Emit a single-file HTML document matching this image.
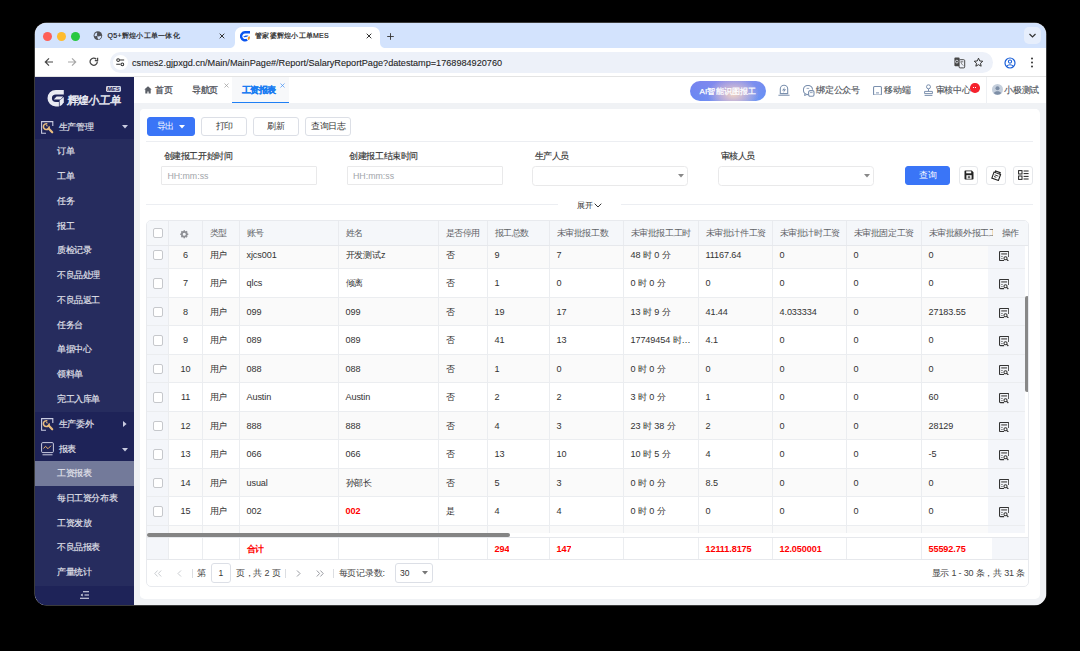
<!DOCTYPE html>
<html><head><meta charset="utf-8">
<style>
*{margin:0;padding:0;box-sizing:border-box}
html,body{width:1080px;height:651px;overflow:hidden;background:#000;font-family:"Liberation Sans",sans-serif}
.a{position:absolute}
#win{position:absolute;left:35px;top:23px;width:1011px;height:582px;border-radius:11.5px;overflow:hidden;background:#fff;box-shadow:0 0 0 0.5px #777}
#strip{position:absolute;left:0;top:0;width:1011px;height:25px;background:#d3e3fd}
.dot{position:absolute;top:9px;width:9px;height:9px;border-radius:50%}
#toolbar{position:absolute;left:0;top:25px;width:1011px;height:29px;background:#fff;border-bottom:1px solid #e4e4e4}
#omni{position:absolute;left:75px;top:4px;width:883px;height:21px;border-radius:11px;background:#edf1f9}
#page{position:absolute;left:0;top:54px;width:1011px;height:528px;background:#f0f2f5}
#side{position:absolute;left:0;top:0;width:99px;height:528px;background:#262c5e;color:#e8e9f0}
#hdr{position:absolute;left:99px;top:0;width:912px;height:26px;background:#fff}
.tt{font-size:7px;letter-spacing:0.25px;line-height:11px;white-space:nowrap;-webkit-text-stroke:.2px #1f1f1f}
.mi{left:0;width:99px;height:24.75px;background:#1e2358}
.mt{top:6.2px;font-size:9px;line-height:12px;color:#e2e3ec;white-space:nowrap;letter-spacing:-.2px;-webkit-text-stroke:.15px #e2e3ec}
.st{left:22px;height:24.75px;padding-top:6.1px;font-size:9px;line-height:12px;color:#e2e3ec;white-space:nowrap;letter-spacing:-.4px;-webkit-text-stroke:.15px #e2e3ec}
#card{position:absolute;left:105px;top:32px;width:899px;height:489px;background:#fff;border-radius:4px}

.ht{font-size:9px;line-height:12px;white-space:nowrap;letter-spacing:-.4px;-webkit-text-stroke:.25px currentColor}
.ht2{font-size:9px;line-height:12px;white-space:nowrap;color:#50545b;letter-spacing:-.3px;-webkit-text-stroke:.15px #50545b}
.btn{top:116.5px;height:19px;letter-spacing:-.4px;border:1px solid #dcdfe6;border-radius:3px;background:#fff;font-size:9px;line-height:12px;padding-top:2.8px;text-align:center;color:#333;white-space:nowrap}
.lb{top:150px;font-size:9px;line-height:12px;color:#333;white-space:nowrap;letter-spacing:-.45px;-webkit-text-stroke:.15px #333}
.inp{top:166.4px;width:155.5px;height:18.2px;border:1px solid #e9e9ea;border-radius:1px}
.ph{top:170.8px;font-size:8.8px;line-height:11px;color:#a2a5aa;white-space:nowrap}
.th{height:14px;padding:0 0 0 6.8px;font-size:9px;line-height:12px;color:#606266;white-space:nowrap;overflow:hidden;letter-spacing:-.45px}
.td{height:14px;padding:0 0 0 6.5px;font-size:9.1px;letter-spacing:-.1px;line-height:12px;color:#333;white-space:nowrap;overflow:hidden}
.cb{width:10.6px;height:10.6px;border:1px solid #c6c8cc;border-radius:2px;background:#fff}
.pg{font-size:9px;line-height:12px;color:#444;white-space:nowrap;letter-spacing:-.2px}
</style></head><body>
<div id="win">
  <div id="strip">
    <div class="dot" style="left:7.5px;background:#fe5f57"></div>
    <div class="dot" style="left:21.9px;background:#febc2e"></div>
    <div class="dot" style="left:36px;background:#28c840"></div>
    <svg class="a" style="left:58px;top:8px" width="10" height="10" viewBox="0 0 10 10"><circle cx="4.9" cy="4.6" r="4.3" fill="#4f5157"/><path d="M1.7 3.4C2.3 2.3 3.3 1.7 4.3 1.9 3.8 2.8 3.6 3.5 4.4 4.2 3.7 5 2.6 5.3 1.5 5.1z" fill="#d3e3fd"/><path d="M3.9 5.4C5.1 5.9 6.7 5.2 8.2 4.7 8.5 6.2 7.4 8 5.2 8.4 4.6 7.6 4.8 6.5 3.9 5.4z" fill="#d3e3fd"/></svg>
    <div class="a tt" style="left:72.6px;top:7px;color:#1f1f1f">Q5+辉煌小工单一体化</div>
    <svg class="a" style="left:183px;top:9px" width="8" height="8" viewBox="0 0 8 8"><path d="M1.7 1.7l4.6 4.6M6.3 1.7l-4.6 4.6" stroke="#333" stroke-width="1"/></svg>
    <svg class="a" style="left:194px;top:4px" width="157" height="21" viewBox="0 0 157 21"><path d="M0 21c4 0 6-2 6-6V7c0-4 3-7 7-7h131c4 0 7 3 7 7v8c0 4 2 6 6 6z" fill="#fff"/></svg>
    <svg class="a" style="left:205px;top:8px" width="11" height="11" viewBox="0 0 11 11"><path d="M10 1.3H5A4 4 0 1 0 7.2 8.7" stroke="#0b55ef" stroke-width="2.4" fill="none"/><path d="M3 6.1C4.1 4.6 6.1 4.2 8.5 4.6 7.5 5.8 5.7 6.5 3 6.1z" fill="#0b55ef"/><ellipse cx="8.9" cy="7.1" rx="1.05" ry="1.9" transform="rotate(15 8.9 7.1)" fill="#f7931e"/></svg>
    <div class="a tt" style="left:220px;top:7px;color:#1f1f1f">管家婆辉煌小工单MES</div>
    <svg class="a" style="left:330px;top:9px" width="8" height="8" viewBox="0 0 8 8"><path d="M1.7 1.7l4.6 4.6M6.3 1.7l-4.6 4.6" stroke="#333" stroke-width="1"/></svg>
    <svg class="a" style="left:351px;top:8.5px" width="9" height="9" viewBox="0 0 9 9"><path d="M4.5 1.2v6.6M1.2 4.5h6.6" stroke="#333" stroke-width=".9"/></svg>
    <div class="a" style="left:989px;top:4px;width:17px;height:17px;border-radius:5px;background:#e6eefc"></div>
    <svg class="a" style="left:993px;top:9px" width="9" height="7" viewBox="0 0 9 7"><path d="M1.5 2l3 3 3-3" stroke="#333" stroke-width="1.2" fill="none"/></svg>
  </div>
  <div id="toolbar">
    <svg class="a" style="left:9px;top:9.4px" width="10" height="10" viewBox="0 0 10 10"><path d="M9 5H1.5M5 1.3L1.3 5 5 8.7" stroke="#474747" stroke-width="1.2" fill="none"/></svg>
    <svg class="a" style="left:31.5px;top:9.4px" width="10" height="10" viewBox="0 0 10 10"><path d="M1 5h7.5M5 1.3L8.7 5 5 8.7" stroke="#a8a8a8" stroke-width="1.2" fill="none"/></svg>
    <svg class="a" style="left:53.5px;top:9.4px" width="10" height="10" viewBox="0 0 10 10"><path d="M8.3 4.6A3.6 3.6 0 1 1 7.3 2.2" stroke="#474747" stroke-width="1.25" fill="none"/><path d="M8.6 0.8v2.8H5.8" stroke="#474747" stroke-width="1.25" fill="none"/></svg>
    <div id="omni">
      <div class="a" style="left:2.6px;top:3px;width:15px;height:15px;border-radius:50%;background:#fff"></div>
      <svg class="a" style="left:6px;top:6.2px" width="8.5" height="8.5" viewBox="0 0 10 10"><circle cx="2.5" cy="2.4" r="1.6" stroke="#333" stroke-width="1.2" fill="none"/><path d="M4.6 2.4h5" stroke="#333" stroke-width="1.3"/><circle cx="7.5" cy="7.4" r="1.6" stroke="#333" stroke-width="1.2" fill="none"/><path d="M.3 7.4h5" stroke="#333" stroke-width="1.3"/></svg>
      <div class="a" style="left:22px;top:4.8px;font-size:9.15px;line-height:13px;color:#1f1f1f;white-space:nowrap;-webkit-text-stroke:.1px #1f1f1f">csmes2.gjpxgd.cn/Main/MainPage#/Report/SalaryReportPage?datestamp=1768984920760</div>
    </div>
        <svg class="a" style="left:918.5px;top:9px" width="12" height="12" viewBox="0 0 12 12"><rect x=".4" y=".4" width="5.2" height="8.8" rx="1" fill="#474747"/><circle cx="2.9" cy="4.6" r="1.4" stroke="#eef1f9" stroke-width=".8" fill="none"/><rect x="5.1" y="2.7" width="5.6" height="8.2" rx="1" fill="#eef1f9" stroke="#474747" stroke-width="1"/><path d="M6.4 4.8h3M7.9 4.2v.8M6.9 4.9c.4 1.6 1.3 3 2.6 3.7" stroke="#666" stroke-width=".75" fill="none"/></svg>
    <svg class="a" style="left:938px;top:8.5px" width="11" height="11" viewBox="0 0 11 11"><path d="M5.5 1.2l1.25 2.75 3 .3-2.25 2 .65 2.95-2.65-1.5-2.65 1.5.65-2.95-2.25-2 3-.3z" stroke="#333" stroke-width="1" fill="none" stroke-linejoin="round"/></svg>
    <svg class="a" style="left:968.5px;top:8.5px" width="12" height="12" viewBox="0 0 12 12"><circle cx="6" cy="6" r="5" stroke="#1a5fd8" stroke-width="1.2" fill="none"/><circle cx="6" cy="4.6" r="1.6" stroke="#1a5fd8" stroke-width="1.1" fill="none"/><path d="M2.8 9.2c1.6-1.9 4.8-1.9 6.4 0" stroke="#1a5fd8" stroke-width="1.1" fill="none"/></svg>
    <svg class="a" style="left:994.5px;top:9px" width="4" height="11" viewBox="0 0 4 11"><circle cx="2" cy="1.6" r="1" fill="#333"/><circle cx="2" cy="5.5" r="1" fill="#333"/><circle cx="2" cy="9.4" r="1" fill="#333"/></svg>
  </div>
  <div id="page">
    <div id="side">
<div class="a" style="left:0;top:0;width:99px;height:37.6px;background:#1e2358"></div>
<svg class="a" style="left:11.7px;top:11.5px" width="18" height="18" viewBox="0 0 18 18"><path d="M16.8 .9H8.8A8.3 8.3 0 0 0 8.8 17.5H11.9V13H8.9A4 3.7 0 0 1 8.9 5.6H16.8Z" fill="#e9eaf2"/><path d="M6.8 10.6L9.6 7.5H16.2L13.4 10.6Z" fill="#e9eaf2"/><path d="M12.6 17.2L12.6 11.4 16.8 7.9V13.2A8 8 0 0 1 12.6 17.2Z" fill="#e9eaf2"/></svg>
<div class="a" style="left:32.3px;top:16.8px;font-size:11px;line-height:12px;color:#e9eaf2;letter-spacing:-0.2px;transform:skewX(-7deg);-webkit-text-stroke:0.5px #e9eaf2;white-space:nowrap">辉煌小工单</div>
<svg class="a" style="left:71.4px;top:8.9px" width="15" height="6" viewBox="0 0 15 6"><rect x="0" y="0" width="15" height="6" rx="1.4" fill="#d3d6e6"/><text x="7.6" y="5.05" text-anchor="middle" font-family="Liberation Sans" font-weight="bold" font-style="italic" font-size="5.6" fill="#1e2358" letter-spacing=".15">MES</text></svg>
<div class="a mi" style="top:37.60px"><svg class="a" style="left:6px;top:6.4px" width="13" height="13" viewBox="0 0 13 13"><path d="M11.8 5V.6H.6v11.6H5" stroke="#c9cbe0" stroke-width="1.1" fill="none"/><path d="M6.3 2.9A2.9 2.9 0 1 0 8.2 5.3" stroke="#e9bd80" stroke-width="1.6" fill="none"/><path d="M5.2 4.6l1.4.5" stroke="#e9bd80" stroke-width="1.1"/><path d="M7.6 7.6l3.6 3.7" stroke="#e9bd80" stroke-width="2.2" stroke-linecap="round"/></svg><div class="a mt" style="left:23.5px">生产管理</div><svg class="a" style="left:86.5px;top:10.5px" width="6" height="4" viewBox="0 0 6 4"><path d="M0 0h6L3 3.6z" fill="#c9cbe0"/></svg></div>
<div class="a" style="left:0;top:62.35px;width:99px;height:272.25px;background:#262c5e"></div>
<div class="a st" style="top:62.35px">订单</div>
<div class="a st" style="top:87.10px">工单</div>
<div class="a st" style="top:111.85px">任务</div>
<div class="a st" style="top:136.60px">报工</div>
<div class="a st" style="top:161.35px">质检记录</div>
<div class="a st" style="top:186.10px">不良品处理</div>
<div class="a st" style="top:210.85px">不良品返工</div>
<div class="a st" style="top:235.60px">任务台</div>
<div class="a st" style="top:260.35px">单据中心</div>
<div class="a st" style="top:285.10px">领料单</div>
<div class="a st" style="top:309.85px">完工入库单</div>
<div class="a mi" style="top:334.60px"><svg class="a" style="left:6px;top:6.4px" width="13" height="13" viewBox="0 0 13 13"><path d="M11.8 5V.6H.6v11.6H5" stroke="#c9cbe0" stroke-width="1.1" fill="none"/><path d="M6.3 2.9A2.9 2.9 0 1 0 8.2 5.3" stroke="#e9bd80" stroke-width="1.6" fill="none"/><path d="M5.2 4.6l1.4.5" stroke="#e9bd80" stroke-width="1.1"/><path d="M7.6 7.6l3.6 3.7" stroke="#e9bd80" stroke-width="2.2" stroke-linecap="round"/></svg><div class="a mt" style="left:23.5px">生产委外</div><svg class="a" style="left:88.3px;top:9.5px" width="4" height="6" viewBox="0 0 4 6"><path d="M0 0v6l3.6-3z" fill="#c9cbe0"/></svg></div>
<div class="a mi" style="top:359.35px"><svg class="a" style="left:6px;top:6px" width="13" height="14" viewBox="0 0 13 14"><rect x=".6" y=".6" width="11.8" height="10" rx="1.2" stroke="#c9cbe0" stroke-width="1" fill="none"/><path d="M2.5 6.5l2-2.2 2.5 2.4 3-3" stroke="#e8b06a" stroke-width="1" fill="none"/><path d="M1.5 12.8h10" stroke="#c9cbe0" stroke-width="1"/></svg><div class="a mt" style="left:23.5px">报表</div><svg class="a" style="left:86.6px;top:11.2px" width="6" height="4" viewBox="0 0 6 4"><path d="M0 0h6L3 3.6z" fill="#c9cbe0"/></svg></div>
<div class="a" style="left:0;top:384.10px;width:99px;height:123.75px;background:#262c5e"></div>
<div class="a" style="left:0;top:383.80px;width:99px;height:25px;background:#737a9a"></div>
<div class="a st" style="top:384.10px">工资报表</div>
<div class="a st" style="top:408.85px">每日工资分布表</div>
<div class="a st" style="top:433.60px">工资发放</div>
<div class="a st" style="top:458.35px">不良品报表</div>
<div class="a st" style="top:483.10px">产量统计</div>
<div class="a" style="left:0;top:508.5px;width:99px;height:19.5px;background:#1e2358"></div>
<svg class="a" style="left:45px;top:513.5px" width="9" height="8" viewBox="0 0 9 8"><path d="M3 .7h6M4.5 4h4.5M0 7.3h9" stroke="#e9eaf2" stroke-width="1.1"/><path d="M2.6 2.4L.6 4l2 1.6z" fill="#e9eaf2"/></svg>
</div>
    <div id="hdr"></div>
    <div id="card"></div>
  </div>
  <div id="abs" style="position:absolute;left:-35px;top:-23px;width:1080px;height:651px">
<div class="a" style="left:134px;top:77px;width:912px;height:26px;background:#fff"></div>
<svg class="a" style="left:144px;top:86px" width="8" height="8" viewBox="0 0 8 8"><path d="M4 .3L.3 3.6h1v4h2.1V5.4h1.2v2.2h2.1v-4h1z" fill="#5a5e66"/></svg>
<div class="a ht" style="left:155px;top:84px;color:#4a4d55">首页</div>
<div class="a ht" style="left:192px;top:84px;color:#4a4d55">导航页</div>
<svg class="a" style="left:223.5px;top:83px" width="5" height="5" viewBox="0 0 5 5"><path d="M.5.5l4 4M4.5.5l-4 4" stroke="#999" stroke-width=".7"/></svg>
<div class="a" style="left:232.2px;top:77px;width:56.8px;height:26px;background:#f7f8fa"></div>
<div class="a" style="left:232.2px;top:101.5px;width:56.8px;height:1.8px;background:#1e7ff5"></div>
<div class="a ht" style="left:241.7px;top:84px;color:#1a7cf2;font-weight:bold">工资报表</div>
<svg class="a" style="left:279.5px;top:83px" width="5" height="5" viewBox="0 0 5 5"><path d="M.5.5l4 4M4.5.5l-4 4" stroke="#3d8ef5" stroke-width=".7"/></svg>
<div class="a" style="left:689.7px;top:81.2px;width:76px;height:19.7px;border-radius:10px;background:radial-gradient(ellipse 34% 85% at 57% 66%,rgba(240,212,196,1) 0%,rgba(220,192,208,.75) 40%,rgba(180,160,220,0) 100%),linear-gradient(180deg,rgba(130,130,235,.5),rgba(90,140,245,.3)),linear-gradient(90deg,#6a86f3 0%,#8b95ee 45%,#8aa0ef 65%,#6893f5 100%)"></div>
<div class="a" style="left:699.5px;top:86.2px;font-size:8px;line-height:11px;color:#fff;white-space:nowrap;letter-spacing:.15px;-webkit-text-stroke:.25px #fff">AI智能识图报工</div>
<svg class="a" style="left:778px;top:84px" width="12" height="12" viewBox="0 0 12 12"><path d="M2.3 9.6V5a3.7 3.7 0 0 1 7.4 0v4.6z" stroke="#7b90ae" stroke-width="1.1" fill="none"/><path d="M7.1 2.7L4 6.5h2.1L5 9.2l3.1-3.9H6z" fill="#7b90ae"/><path d="M.4 11.3h11.2" stroke="#7b90ae" stroke-width="1.1"/></svg>
<svg class="a" style="left:802.8px;top:84.5px" width="12" height="12" viewBox="0 0 12 12"><path d="M5.2 9.6A4.6 4.6 0 1 1 9.6 4.6" stroke="#7b90ae" stroke-width="1.1" fill="none"/><path d="M2 8.6l-.5 1.9 2.2-.8" stroke="#7b90ae" stroke-width="1" fill="none"/><rect x="5.6" y="5.6" width="5.4" height="5.6" rx="1.5" stroke="#7b90ae" stroke-width="1.1" fill="#fff"/><path d="M7 7.6h2.6M3.6 3.4h2.6" stroke="#7b90ae" stroke-width=".8"/></svg>
<div class="a ht2" style="left:816.4px;top:84px">绑定公众号</div>
<svg class="a" style="left:873.2px;top:85.5px" width="9" height="9.5" viewBox="0 0 9 9.5"><rect x=".55" y=".55" width="7.9" height="8.4" rx="1" stroke="#7b90ae" stroke-width="1.1" fill="none"/><path d="M3 6.9h3" stroke="#7b90ae" stroke-width="1"/></svg>
<div class="a ht2" style="left:884.3px;top:84px">移动端</div>
<svg class="a" style="left:924px;top:83.5px" width="9" height="12" viewBox="0 0 9 12"><circle cx="4.5" cy="2.8" r="2" stroke="#7b90ae" stroke-width="1" fill="none"/><path d="M4.5 4.8v2.4M.6 9.6V7.4h7.8v2.2zM.6 11.4h7.8" stroke="#7b90ae" stroke-width="1" fill="none"/></svg>
<div class="a ht2" style="left:935.7px;top:84px">审核中心</div>
<div class="a" style="left:970px;top:83px;width:9.5px;height:9.5px;border-radius:50%;background:#f5222d"></div>
<div class="a" style="left:973px;top:87px;width:1px;height:1px;background:#fff;box-shadow:2px 0 #fff"></div>
<div class="a" style="left:985.5px;top:77px;width:1px;height:26px;background:#eef0f3"></div>
<svg class="a" style="left:992px;top:84px" width="11" height="11" viewBox="0 0 11 11"><circle cx="5.5" cy="5.5" r="5.5" fill="#c5cfdc"/><circle cx="5.5" cy="4.3" r="2" fill="#7d8ea6"/><path d="M1.8 9.3c1.5-2.6 5.9-2.6 7.4 0A5.5 5.5 0 0 1 1.8 9.3z" fill="#7d8ea6"/></svg>
<div class="a ht2" style="left:1004.4px;top:84px">小极测试</div>
<div class="a" style="left:139.6px;top:109.4px;width:900.6px;height:489.6px;background:#fff;border-radius:5px"></div>
<div class="a btn" style="left:146.7px;width:48.3px;background:#3a75f7;border-color:#3a75f7;color:#fff;padding-left:9px;text-align:left">导出<svg style="position:absolute;left:31px;top:7.5px" width="6" height="4" viewBox="0 0 6 4"><path d="M0 0h6L3 3.6z" fill="#fff"/></svg></div>
<div class="a btn" style="left:201px;width:46.3px">打印</div>
<div class="a btn" style="left:252.8px;width:46.6px">刷新</div>
<div class="a btn" style="left:305px;width:46.3px">查询日志</div>
<div class="a" style="left:146px;top:141px;width:887px;height:1px;background:#eceef2"></div>
<div class="a lb" style="left:163.8px">创建报工开始时间</div>
<div class="a inp" style="left:161.4px"></div>
<div class="a ph" style="left:167.4px">HH:mm:ss</div>
<div class="a lb" style="left:349.4px">创建报工结束时间</div>
<div class="a inp" style="left:347.0px"></div>
<div class="a ph" style="left:353.0px">HH:mm:ss</div>
<div class="a lb" style="left:534.7px">生产人员</div>
<div class="a inp" style="left:532.3px;height:19.8px;border-radius:3.5px"></div>
<svg class="a" style="left:677.8px;top:173.5px" width="6" height="4" viewBox="0 0 6 4"><path d="M0 0h6L3 3.6z" fill="#888"/></svg>
<div class="a lb" style="left:720.7px">审核人员</div>
<div class="a inp" style="left:718.3px;height:19.8px;border-radius:3.5px"></div>
<svg class="a" style="left:863.8px;top:173.5px" width="6" height="4" viewBox="0 0 6 4"><path d="M0 0h6L3 3.6z" fill="#888"/></svg>
<div class="a btn" style="left:904.7px;top:165.7px;width:45.8px;height:18.9px;background:#3a75f7;border-color:#3a75f7;color:#fff;padding-top:2.7px">查询</div>
<div class="a" style="left:958.7px;top:165.5px;width:19.5px;height:19.5px;border:1px solid #e6e8eb;border-radius:3px"></div>
<div class="a" style="left:986px;top:165.5px;width:19.5px;height:19.5px;border:1px solid #e6e8eb;border-radius:3px"></div>
<div class="a" style="left:1013.4px;top:165.5px;width:19.5px;height:19.5px;border:1px solid #e6e8eb;border-radius:3px"></div>
<svg class="a" style="left:963.5px;top:170px" width="10" height="10" viewBox="0 0 10 10"><path d="M.5 1.3A.8.8 0 0 1 1.3.5h6.5l1.7 1.7v6.5a.8.8 0 0 1-.8.8H1.3a.8.8 0 0 1-.8-.8z" fill="#222"/><rect x="2.2" y="1.3" width="5" height="2" fill="#fff"/><rect x="2.4" y="5.2" width="5.2" height="3.6" fill="#fff"/><path d="M5 5.8v2.6M3.7 7.1h2.6" stroke="#222" stroke-width=".8"/></svg>
<svg class="a" style="left:990.5px;top:169.5px" width="11" height="11" viewBox="0 0 11 11"><g transform="rotate(20 5.5 5.5)"><path d="M2 3.2h7v6.3H2z" stroke="#222" stroke-width="1.1" fill="none"/><path d="M3 3.2V1.6h5v1.6" stroke="#222" stroke-width="1.1" fill="none"/><path d="M3.5 5.5h4M3.5 7.3h2.5" stroke="#222" stroke-width=".8"/></g></svg>
<svg class="a" style="left:1017.5px;top:170px" width="11" height="10" viewBox="0 0 11 10"><rect x=".6" y=".6" width="3.4" height="3.4" stroke="#222" stroke-width="1" fill="none"/><rect x=".6" y="6" width="3.4" height="3.4" stroke="#222" stroke-width="1" fill="none"/><path d="M5.6 1h5M5.6 3.6h5M5.6 6.4h5M5.6 9h5" stroke="#222" stroke-width="1"/></svg>
<div class="a" style="left:146px;top:204.3px;width:412px;height:1px;background:#eceef2"></div>
<div class="a" style="left:621px;top:204.3px;width:412px;height:1px;background:#eceef2"></div>
<div class="a" style="left:577px;top:199.6px;font-size:8px;line-height:11px;color:#333;white-space:nowrap;letter-spacing:-.45px">展开</div>
<svg class="a" style="left:594.3px;top:202.6px" width="8" height="5" viewBox="0 0 8 5"><path d="M.7.7L4 4 7.3.7" stroke="#333" stroke-width="1" fill="none"/></svg>
<div class="a" style="left:146px;top:220px;width:883px;height:367px;border:1px solid #e8eaee;border-radius:5px;overflow:hidden;background:#fff">
<div class="a" style="left:0;top:0;width:900px;height:24px;background:#f5f7fa"></div>
<div class="a" style="left:0;top:24px;width:900px;height:1px;background:#e6e8ec"></div>
<div class="a" style="left:21px;top:0;width:1px;height:24px;background:#e9ebef"></div>
<div class="a" style="left:55px;top:0;width:1px;height:24px;background:#e9ebef"></div>
<div class="a" style="left:92px;top:0;width:1px;height:24px;background:#e9ebef"></div>
<div class="a" style="left:191px;top:0;width:1px;height:24px;background:#e9ebef"></div>
<div class="a" style="left:291px;top:0;width:1px;height:24px;background:#e9ebef"></div>
<div class="a" style="left:340px;top:0;width:1px;height:24px;background:#e9ebef"></div>
<div class="a" style="left:402px;top:0;width:1px;height:24px;background:#e9ebef"></div>
<div class="a" style="left:476px;top:0;width:1px;height:24px;background:#e9ebef"></div>
<div class="a" style="left:551px;top:0;width:1px;height:24px;background:#e9ebef"></div>
<div class="a" style="left:625px;top:0;width:1px;height:24px;background:#e9ebef"></div>
<div class="a" style="left:699px;top:0;width:1px;height:24px;background:#e9ebef"></div>
<div class="a" style="left:774px;top:0;width:1px;height:24px;background:#e9ebef"></div>
<div class="a th" style="left:56px;top:6.2px;width:37px">类型</div>
<div class="a th" style="left:93px;top:6.2px;width:99px">账号</div>
<div class="a th" style="left:192px;top:6.2px;width:100px">姓名</div>
<div class="a th" style="left:292px;top:6.2px;width:49px">是否停用</div>
<div class="a th" style="left:341px;top:6.2px;width:62px">报工总数</div>
<div class="a th" style="left:403px;top:6.2px;width:74px">未审批报工数</div>
<div class="a th" style="left:477px;top:6.2px;width:75px">未审批报工工时</div>
<div class="a th" style="left:552px;top:6.2px;width:74px">未审批计件工资</div>
<div class="a th" style="left:626px;top:6.2px;width:74px">未审批计时工资</div>
<div class="a th" style="left:700px;top:6.2px;width:75px">未审批固定工资</div>
<div class="a th" style="left:775px;top:6.2px;width:71px">未审批额外报工工资</div>
<div class="a th" style="left:854.8px;top:6.2px;padding-left:0">操作</div>
<div class="a cb" style="left:5.6px;top:6.8px"></div>
<svg class="a" style="left:33.1px;top:9.1px" width="8.5" height="8.5" viewBox="0 0 8 8"><circle cx="4" cy="4" r="2.3" stroke="#8f9196" stroke-width="1.6" fill="none"/><rect x="3.3" y=".2" width="1.4" height="2" transform="rotate(0 4 4)" fill="#8f9196"/><rect x="3.3" y=".2" width="1.4" height="2" transform="rotate(45 4 4)" fill="#8f9196"/><rect x="3.3" y=".2" width="1.4" height="2" transform="rotate(90 4 4)" fill="#8f9196"/><rect x="3.3" y=".2" width="1.4" height="2" transform="rotate(135 4 4)" fill="#8f9196"/><rect x="3.3" y=".2" width="1.4" height="2" transform="rotate(180 4 4)" fill="#8f9196"/><rect x="3.3" y=".2" width="1.4" height="2" transform="rotate(225 4 4)" fill="#8f9196"/><rect x="3.3" y=".2" width="1.4" height="2" transform="rotate(270 4 4)" fill="#8f9196"/><rect x="3.3" y=".2" width="1.4" height="2" transform="rotate(315 4 4)" fill="#8f9196"/></svg>
<div class="a" style="left:0;top:25px;width:900px;height:291px;overflow:hidden">
<div class="a" style="left:0;top:-6px;width:900px;height:28px;background:#fafafa"></div>
<div class="a" style="left:0;top:22px;width:900px;height:1px;background:#ebedf0"></div>
<div class="a" style="left:0;top:23px;width:900px;height:28px;background:#fff"></div>
<div class="a" style="left:0;top:51px;width:900px;height:1px;background:#ebedf0"></div>
<div class="a" style="left:0;top:52px;width:900px;height:27px;background:#fafafa"></div>
<div class="a" style="left:0;top:79px;width:900px;height:1px;background:#ebedf0"></div>
<div class="a" style="left:0;top:80px;width:900px;height:28px;background:#fff"></div>
<div class="a" style="left:0;top:108px;width:900px;height:1px;background:#ebedf0"></div>
<div class="a" style="left:0;top:109px;width:900px;height:27px;background:#fafafa"></div>
<div class="a" style="left:0;top:136px;width:900px;height:1px;background:#ebedf0"></div>
<div class="a" style="left:0;top:137px;width:900px;height:28px;background:#fff"></div>
<div class="a" style="left:0;top:165px;width:900px;height:1px;background:#ebedf0"></div>
<div class="a" style="left:0;top:166px;width:900px;height:27px;background:#fafafa"></div>
<div class="a" style="left:0;top:193px;width:900px;height:1px;background:#ebedf0"></div>
<div class="a" style="left:0;top:194px;width:900px;height:28px;background:#fff"></div>
<div class="a" style="left:0;top:222px;width:900px;height:1px;background:#ebedf0"></div>
<div class="a" style="left:0;top:223px;width:900px;height:27px;background:#fafafa"></div>
<div class="a" style="left:0;top:250px;width:900px;height:1px;background:#ebedf0"></div>
<div class="a" style="left:0;top:251px;width:900px;height:28px;background:#fff"></div>
<div class="a" style="left:0;top:279px;width:900px;height:1px;background:#ebedf0"></div>
<div class="a" style="left:0;top:280px;width:900px;height:27px;background:#fafafa"></div>
<div class="a" style="left:0;top:307px;width:900px;height:1px;background:#ebedf0"></div>
<div class="a" style="left:21px;top:0;width:1px;height:300px;background:#ebedf0"></div>
<div class="a" style="left:55px;top:0;width:1px;height:300px;background:#ebedf0"></div>
<div class="a" style="left:92px;top:0;width:1px;height:300px;background:#ebedf0"></div>
<div class="a" style="left:191px;top:0;width:1px;height:300px;background:#ebedf0"></div>
<div class="a" style="left:291px;top:0;width:1px;height:300px;background:#ebedf0"></div>
<div class="a" style="left:340px;top:0;width:1px;height:300px;background:#ebedf0"></div>
<div class="a" style="left:402px;top:0;width:1px;height:300px;background:#ebedf0"></div>
<div class="a" style="left:476px;top:0;width:1px;height:300px;background:#ebedf0"></div>
<div class="a" style="left:551px;top:0;width:1px;height:300px;background:#ebedf0"></div>
<div class="a" style="left:625px;top:0;width:1px;height:300px;background:#ebedf0"></div>
<div class="a" style="left:699px;top:0;width:1px;height:300px;background:#ebedf0"></div>
<div class="a" style="left:774px;top:0;width:1px;height:300px;background:#ebedf0"></div>
<div class="a" style="left:0;top:0;width:21px;height:300px;background:#f4f6fa"></div>
<div class="a" style="left:0;top:22px;width:21px;height:1px;background:#ebedf0"></div>
<div class="a cb" style="left:5.6px;top:3.65px"></div>
<div class="a td" style="left:22px;top:2.75px;width:33px;text-align:center;padding-left:0">6</div>
<div class="a td" style="left:56px;top:2.75px;width:36px">用户</div>
<div class="a td" style="left:93px;top:2.75px;width:98px">xjcs001</div>
<div class="a td" style="left:192px;top:2.75px;width:99px">开发测试z</div>
<div class="a td" style="left:292px;top:2.75px;width:48px">否</div>
<div class="a td" style="left:341px;top:2.75px;width:61px">9</div>
<div class="a td" style="left:403px;top:2.75px;width:73px">7</div>
<div class="a td" style="left:477px;top:2.75px;width:74px">48 时 0 分</div>
<div class="a td" style="left:552px;top:2.75px;width:73px">11167.64</div>
<div class="a td" style="left:626px;top:2.75px;width:73px">0</div>
<div class="a td" style="left:700px;top:2.75px;width:74px">0</div>
<div class="a td" style="left:775px;top:2.75px;width:1077px">0</div>
<div class="a" style="left:0;top:51px;width:21px;height:1px;background:#ebedf0"></div>
<div class="a cb" style="left:5.6px;top:32.15px"></div>
<div class="a td" style="left:22px;top:31.25px;width:33px;text-align:center;padding-left:0">7</div>
<div class="a td" style="left:56px;top:31.25px;width:36px">用户</div>
<div class="a td" style="left:93px;top:31.25px;width:98px">qlcs</div>
<div class="a td" style="left:192px;top:31.25px;width:99px">倾离</div>
<div class="a td" style="left:292px;top:31.25px;width:48px">否</div>
<div class="a td" style="left:341px;top:31.25px;width:61px">1</div>
<div class="a td" style="left:403px;top:31.25px;width:73px">0</div>
<div class="a td" style="left:477px;top:31.25px;width:74px">0 时 0 分</div>
<div class="a td" style="left:552px;top:31.25px;width:73px">0</div>
<div class="a td" style="left:626px;top:31.25px;width:73px">0</div>
<div class="a td" style="left:700px;top:31.25px;width:74px">0</div>
<div class="a td" style="left:775px;top:31.25px;width:1077px">0</div>
<div class="a" style="left:0;top:79px;width:21px;height:1px;background:#ebedf0"></div>
<div class="a cb" style="left:5.6px;top:60.65px"></div>
<div class="a td" style="left:22px;top:59.75px;width:33px;text-align:center;padding-left:0">8</div>
<div class="a td" style="left:56px;top:59.75px;width:36px">用户</div>
<div class="a td" style="left:93px;top:59.75px;width:98px">099</div>
<div class="a td" style="left:192px;top:59.75px;width:99px">099</div>
<div class="a td" style="left:292px;top:59.75px;width:48px">否</div>
<div class="a td" style="left:341px;top:59.75px;width:61px">19</div>
<div class="a td" style="left:403px;top:59.75px;width:73px">17</div>
<div class="a td" style="left:477px;top:59.75px;width:74px">13 时 9 分</div>
<div class="a td" style="left:552px;top:59.75px;width:73px">41.44</div>
<div class="a td" style="left:626px;top:59.75px;width:73px">4.033334</div>
<div class="a td" style="left:700px;top:59.75px;width:74px">0</div>
<div class="a td" style="left:775px;top:59.75px;width:1077px">27183.55</div>
<div class="a" style="left:0;top:108px;width:21px;height:1px;background:#ebedf0"></div>
<div class="a cb" style="left:5.6px;top:89.15px"></div>
<div class="a td" style="left:22px;top:88.25px;width:33px;text-align:center;padding-left:0">9</div>
<div class="a td" style="left:56px;top:88.25px;width:36px">用户</div>
<div class="a td" style="left:93px;top:88.25px;width:98px">089</div>
<div class="a td" style="left:192px;top:88.25px;width:99px">089</div>
<div class="a td" style="left:292px;top:88.25px;width:48px">否</div>
<div class="a td" style="left:341px;top:88.25px;width:61px">41</div>
<div class="a td" style="left:403px;top:88.25px;width:73px">13</div>
<div class="a td" style="left:477px;top:88.25px;width:74px">17749454 时…</div>
<div class="a td" style="left:552px;top:88.25px;width:73px">4.1</div>
<div class="a td" style="left:626px;top:88.25px;width:73px">0</div>
<div class="a td" style="left:700px;top:88.25px;width:74px">0</div>
<div class="a td" style="left:775px;top:88.25px;width:1077px">0</div>
<div class="a" style="left:0;top:136px;width:21px;height:1px;background:#ebedf0"></div>
<div class="a cb" style="left:5.6px;top:117.65px"></div>
<div class="a td" style="left:22px;top:116.75px;width:33px;text-align:center;padding-left:0">10</div>
<div class="a td" style="left:56px;top:116.75px;width:36px">用户</div>
<div class="a td" style="left:93px;top:116.75px;width:98px">088</div>
<div class="a td" style="left:192px;top:116.75px;width:99px">088</div>
<div class="a td" style="left:292px;top:116.75px;width:48px">否</div>
<div class="a td" style="left:341px;top:116.75px;width:61px">1</div>
<div class="a td" style="left:403px;top:116.75px;width:73px">0</div>
<div class="a td" style="left:477px;top:116.75px;width:74px">0 时 0 分</div>
<div class="a td" style="left:552px;top:116.75px;width:73px">0</div>
<div class="a td" style="left:626px;top:116.75px;width:73px">0</div>
<div class="a td" style="left:700px;top:116.75px;width:74px">0</div>
<div class="a td" style="left:775px;top:116.75px;width:1077px">0</div>
<div class="a" style="left:0;top:165px;width:21px;height:1px;background:#ebedf0"></div>
<div class="a cb" style="left:5.6px;top:146.15px"></div>
<div class="a td" style="left:22px;top:145.25px;width:33px;text-align:center;padding-left:0">11</div>
<div class="a td" style="left:56px;top:145.25px;width:36px">用户</div>
<div class="a td" style="left:93px;top:145.25px;width:98px">Austin</div>
<div class="a td" style="left:192px;top:145.25px;width:99px">Austin</div>
<div class="a td" style="left:292px;top:145.25px;width:48px">否</div>
<div class="a td" style="left:341px;top:145.25px;width:61px">2</div>
<div class="a td" style="left:403px;top:145.25px;width:73px">2</div>
<div class="a td" style="left:477px;top:145.25px;width:74px">3 时 0 分</div>
<div class="a td" style="left:552px;top:145.25px;width:73px">1</div>
<div class="a td" style="left:626px;top:145.25px;width:73px">0</div>
<div class="a td" style="left:700px;top:145.25px;width:74px">0</div>
<div class="a td" style="left:775px;top:145.25px;width:1077px">60</div>
<div class="a" style="left:0;top:193px;width:21px;height:1px;background:#ebedf0"></div>
<div class="a cb" style="left:5.6px;top:174.65px"></div>
<div class="a td" style="left:22px;top:173.75px;width:33px;text-align:center;padding-left:0">12</div>
<div class="a td" style="left:56px;top:173.75px;width:36px">用户</div>
<div class="a td" style="left:93px;top:173.75px;width:98px">888</div>
<div class="a td" style="left:192px;top:173.75px;width:99px">888</div>
<div class="a td" style="left:292px;top:173.75px;width:48px">否</div>
<div class="a td" style="left:341px;top:173.75px;width:61px">4</div>
<div class="a td" style="left:403px;top:173.75px;width:73px">3</div>
<div class="a td" style="left:477px;top:173.75px;width:74px">23 时 38 分</div>
<div class="a td" style="left:552px;top:173.75px;width:73px">2</div>
<div class="a td" style="left:626px;top:173.75px;width:73px">0</div>
<div class="a td" style="left:700px;top:173.75px;width:74px">0</div>
<div class="a td" style="left:775px;top:173.75px;width:1077px">28129</div>
<div class="a" style="left:0;top:222px;width:21px;height:1px;background:#ebedf0"></div>
<div class="a cb" style="left:5.6px;top:203.15px"></div>
<div class="a td" style="left:22px;top:202.25px;width:33px;text-align:center;padding-left:0">13</div>
<div class="a td" style="left:56px;top:202.25px;width:36px">用户</div>
<div class="a td" style="left:93px;top:202.25px;width:98px">066</div>
<div class="a td" style="left:192px;top:202.25px;width:99px">066</div>
<div class="a td" style="left:292px;top:202.25px;width:48px">否</div>
<div class="a td" style="left:341px;top:202.25px;width:61px">13</div>
<div class="a td" style="left:403px;top:202.25px;width:73px">10</div>
<div class="a td" style="left:477px;top:202.25px;width:74px">10 时 5 分</div>
<div class="a td" style="left:552px;top:202.25px;width:73px">4</div>
<div class="a td" style="left:626px;top:202.25px;width:73px">0</div>
<div class="a td" style="left:700px;top:202.25px;width:74px">0</div>
<div class="a td" style="left:775px;top:202.25px;width:1077px">-5</div>
<div class="a" style="left:0;top:250px;width:21px;height:1px;background:#ebedf0"></div>
<div class="a cb" style="left:5.6px;top:231.65px"></div>
<div class="a td" style="left:22px;top:230.75px;width:33px;text-align:center;padding-left:0">14</div>
<div class="a td" style="left:56px;top:230.75px;width:36px">用户</div>
<div class="a td" style="left:93px;top:230.75px;width:98px">usual</div>
<div class="a td" style="left:192px;top:230.75px;width:99px">孙部长</div>
<div class="a td" style="left:292px;top:230.75px;width:48px">否</div>
<div class="a td" style="left:341px;top:230.75px;width:61px">5</div>
<div class="a td" style="left:403px;top:230.75px;width:73px">3</div>
<div class="a td" style="left:477px;top:230.75px;width:74px">0 时 0 分</div>
<div class="a td" style="left:552px;top:230.75px;width:73px">8.5</div>
<div class="a td" style="left:626px;top:230.75px;width:73px">0</div>
<div class="a td" style="left:700px;top:230.75px;width:74px">0</div>
<div class="a td" style="left:775px;top:230.75px;width:1077px">0</div>
<div class="a" style="left:0;top:279px;width:21px;height:1px;background:#ebedf0"></div>
<div class="a cb" style="left:5.6px;top:260.15px"></div>
<div class="a td" style="left:22px;top:259.25px;width:33px;text-align:center;padding-left:0">15</div>
<div class="a td" style="left:56px;top:259.25px;width:36px">用户</div>
<div class="a td" style="left:93px;top:259.25px;width:98px">002</div>
<div class="a td" style="left:192px;top:259.25px;width:99px;color:#f00;font-weight:bold">002</div>
<div class="a td" style="left:292px;top:259.25px;width:48px">是</div>
<div class="a td" style="left:341px;top:259.25px;width:61px">4</div>
<div class="a td" style="left:403px;top:259.25px;width:73px">4</div>
<div class="a td" style="left:477px;top:259.25px;width:74px">0 时 0 分</div>
<div class="a td" style="left:552px;top:259.25px;width:73px">0</div>
<div class="a td" style="left:626px;top:259.25px;width:73px">0</div>
<div class="a td" style="left:700px;top:259.25px;width:74px">0</div>
<div class="a td" style="left:775px;top:259.25px;width:1077px">0</div>
<div class="a" style="left:0;top:307px;width:21px;height:1px;background:#ebedf0"></div>
<div class="a cb" style="left:5.6px;top:288.65px"></div>
<div class="a" style="left:841px;top:0;width:37px;height:300px;background:#f4f6fa"></div>
<div class="a" style="left:841px;top:22px;width:37px;height:1px;background:#ebedf0"></div>
<svg class="a" style="left:851.8px;top:4.65px" width="10.5" height="10.5" viewBox="0 0 10 10"><path d="M4.9 9.2H1.4a.9.9 0 0 1-.9-.9V1.3a.9.9 0 0 1 .9-.9h7a.9.9 0 0 1 .9.9v4.4" stroke="#333" stroke-width="1.05" fill="none"/><rect x="2.1" y="2" width="5.6" height="1.5" fill="#777"/><path d="M2.1 5.2h1.4M2.1 7.2h1.4" stroke="#555" stroke-width=".8"/><circle cx="6.2" cy="6.9" r="1.5" stroke="#333" stroke-width="1" fill="#fff"/><path d="M7.3 8l1.6 1.5" stroke="#333" stroke-width="1.1"/></svg>
<div class="a" style="left:841px;top:51px;width:37px;height:1px;background:#ebedf0"></div>
<svg class="a" style="left:851.8px;top:33.15px" width="10.5" height="10.5" viewBox="0 0 10 10"><path d="M4.9 9.2H1.4a.9.9 0 0 1-.9-.9V1.3a.9.9 0 0 1 .9-.9h7a.9.9 0 0 1 .9.9v4.4" stroke="#333" stroke-width="1.05" fill="none"/><rect x="2.1" y="2" width="5.6" height="1.5" fill="#777"/><path d="M2.1 5.2h1.4M2.1 7.2h1.4" stroke="#555" stroke-width=".8"/><circle cx="6.2" cy="6.9" r="1.5" stroke="#333" stroke-width="1" fill="#fff"/><path d="M7.3 8l1.6 1.5" stroke="#333" stroke-width="1.1"/></svg>
<div class="a" style="left:841px;top:79px;width:37px;height:1px;background:#ebedf0"></div>
<svg class="a" style="left:851.8px;top:61.65px" width="10.5" height="10.5" viewBox="0 0 10 10"><path d="M4.9 9.2H1.4a.9.9 0 0 1-.9-.9V1.3a.9.9 0 0 1 .9-.9h7a.9.9 0 0 1 .9.9v4.4" stroke="#333" stroke-width="1.05" fill="none"/><rect x="2.1" y="2" width="5.6" height="1.5" fill="#777"/><path d="M2.1 5.2h1.4M2.1 7.2h1.4" stroke="#555" stroke-width=".8"/><circle cx="6.2" cy="6.9" r="1.5" stroke="#333" stroke-width="1" fill="#fff"/><path d="M7.3 8l1.6 1.5" stroke="#333" stroke-width="1.1"/></svg>
<div class="a" style="left:841px;top:108px;width:37px;height:1px;background:#ebedf0"></div>
<svg class="a" style="left:851.8px;top:90.15px" width="10.5" height="10.5" viewBox="0 0 10 10"><path d="M4.9 9.2H1.4a.9.9 0 0 1-.9-.9V1.3a.9.9 0 0 1 .9-.9h7a.9.9 0 0 1 .9.9v4.4" stroke="#333" stroke-width="1.05" fill="none"/><rect x="2.1" y="2" width="5.6" height="1.5" fill="#777"/><path d="M2.1 5.2h1.4M2.1 7.2h1.4" stroke="#555" stroke-width=".8"/><circle cx="6.2" cy="6.9" r="1.5" stroke="#333" stroke-width="1" fill="#fff"/><path d="M7.3 8l1.6 1.5" stroke="#333" stroke-width="1.1"/></svg>
<div class="a" style="left:841px;top:136px;width:37px;height:1px;background:#ebedf0"></div>
<svg class="a" style="left:851.8px;top:118.65px" width="10.5" height="10.5" viewBox="0 0 10 10"><path d="M4.9 9.2H1.4a.9.9 0 0 1-.9-.9V1.3a.9.9 0 0 1 .9-.9h7a.9.9 0 0 1 .9.9v4.4" stroke="#333" stroke-width="1.05" fill="none"/><rect x="2.1" y="2" width="5.6" height="1.5" fill="#777"/><path d="M2.1 5.2h1.4M2.1 7.2h1.4" stroke="#555" stroke-width=".8"/><circle cx="6.2" cy="6.9" r="1.5" stroke="#333" stroke-width="1" fill="#fff"/><path d="M7.3 8l1.6 1.5" stroke="#333" stroke-width="1.1"/></svg>
<div class="a" style="left:841px;top:165px;width:37px;height:1px;background:#ebedf0"></div>
<svg class="a" style="left:851.8px;top:147.15px" width="10.5" height="10.5" viewBox="0 0 10 10"><path d="M4.9 9.2H1.4a.9.9 0 0 1-.9-.9V1.3a.9.9 0 0 1 .9-.9h7a.9.9 0 0 1 .9.9v4.4" stroke="#333" stroke-width="1.05" fill="none"/><rect x="2.1" y="2" width="5.6" height="1.5" fill="#777"/><path d="M2.1 5.2h1.4M2.1 7.2h1.4" stroke="#555" stroke-width=".8"/><circle cx="6.2" cy="6.9" r="1.5" stroke="#333" stroke-width="1" fill="#fff"/><path d="M7.3 8l1.6 1.5" stroke="#333" stroke-width="1.1"/></svg>
<div class="a" style="left:841px;top:193px;width:37px;height:1px;background:#ebedf0"></div>
<svg class="a" style="left:851.8px;top:175.65px" width="10.5" height="10.5" viewBox="0 0 10 10"><path d="M4.9 9.2H1.4a.9.9 0 0 1-.9-.9V1.3a.9.9 0 0 1 .9-.9h7a.9.9 0 0 1 .9.9v4.4" stroke="#333" stroke-width="1.05" fill="none"/><rect x="2.1" y="2" width="5.6" height="1.5" fill="#777"/><path d="M2.1 5.2h1.4M2.1 7.2h1.4" stroke="#555" stroke-width=".8"/><circle cx="6.2" cy="6.9" r="1.5" stroke="#333" stroke-width="1" fill="#fff"/><path d="M7.3 8l1.6 1.5" stroke="#333" stroke-width="1.1"/></svg>
<div class="a" style="left:841px;top:222px;width:37px;height:1px;background:#ebedf0"></div>
<svg class="a" style="left:851.8px;top:204.15px" width="10.5" height="10.5" viewBox="0 0 10 10"><path d="M4.9 9.2H1.4a.9.9 0 0 1-.9-.9V1.3a.9.9 0 0 1 .9-.9h7a.9.9 0 0 1 .9.9v4.4" stroke="#333" stroke-width="1.05" fill="none"/><rect x="2.1" y="2" width="5.6" height="1.5" fill="#777"/><path d="M2.1 5.2h1.4M2.1 7.2h1.4" stroke="#555" stroke-width=".8"/><circle cx="6.2" cy="6.9" r="1.5" stroke="#333" stroke-width="1" fill="#fff"/><path d="M7.3 8l1.6 1.5" stroke="#333" stroke-width="1.1"/></svg>
<div class="a" style="left:841px;top:250px;width:37px;height:1px;background:#ebedf0"></div>
<svg class="a" style="left:851.8px;top:232.65px" width="10.5" height="10.5" viewBox="0 0 10 10"><path d="M4.9 9.2H1.4a.9.9 0 0 1-.9-.9V1.3a.9.9 0 0 1 .9-.9h7a.9.9 0 0 1 .9.9v4.4" stroke="#333" stroke-width="1.05" fill="none"/><rect x="2.1" y="2" width="5.6" height="1.5" fill="#777"/><path d="M2.1 5.2h1.4M2.1 7.2h1.4" stroke="#555" stroke-width=".8"/><circle cx="6.2" cy="6.9" r="1.5" stroke="#333" stroke-width="1" fill="#fff"/><path d="M7.3 8l1.6 1.5" stroke="#333" stroke-width="1.1"/></svg>
<div class="a" style="left:841px;top:279px;width:37px;height:1px;background:#ebedf0"></div>
<svg class="a" style="left:851.8px;top:261.15px" width="10.5" height="10.5" viewBox="0 0 10 10"><path d="M4.9 9.2H1.4a.9.9 0 0 1-.9-.9V1.3a.9.9 0 0 1 .9-.9h7a.9.9 0 0 1 .9.9v4.4" stroke="#333" stroke-width="1.05" fill="none"/><rect x="2.1" y="2" width="5.6" height="1.5" fill="#777"/><path d="M2.1 5.2h1.4M2.1 7.2h1.4" stroke="#555" stroke-width=".8"/><circle cx="6.2" cy="6.9" r="1.5" stroke="#333" stroke-width="1" fill="#fff"/><path d="M7.3 8l1.6 1.5" stroke="#333" stroke-width="1.1"/></svg>
<div class="a" style="left:841px;top:307px;width:37px;height:1px;background:#ebedf0"></div>
<div class="a" style="left:878px;top:0;width:5px;height:300px;background:#fff"></div>
<div class="a" style="left:878.2px;top:49.5px;width:3.7px;height:96.3px;border-radius:2px;background:#888"></div>
<div class="a" style="left:0;top:287px;width:900px;height:4px;background:#fff"></div>
<div class="a" style="left:-0.3px;top:287.4px;width:363px;height:3.8px;border-radius:2px;background:#848484"></div>
</div>
<div class="a" style="left:0;top:316px;width:900px;height:1px;background:#e6e8ec"></div>
<div class="a" style="left:0;top:338px;width:900px;height:1px;background:#e6e8ec"></div>
<div class="a" style="left:0;top:317px;width:21px;height:21px;background:#f4f6fa"></div>
<div class="a" style="left:845px;top:317px;width:40px;height:21px;background:#f4f6fa"></div>
<div class="a" style="left:21px;top:317px;width:1px;height:21px;background:#ebedf0"></div>
<div class="a" style="left:55px;top:317px;width:1px;height:21px;background:#ebedf0"></div>
<div class="a" style="left:92px;top:317px;width:1px;height:21px;background:#ebedf0"></div>
<div class="a" style="left:191px;top:317px;width:1px;height:21px;background:#ebedf0"></div>
<div class="a" style="left:291px;top:317px;width:1px;height:21px;background:#ebedf0"></div>
<div class="a" style="left:340px;top:317px;width:1px;height:21px;background:#ebedf0"></div>
<div class="a" style="left:402px;top:317px;width:1px;height:21px;background:#ebedf0"></div>
<div class="a" style="left:476px;top:317px;width:1px;height:21px;background:#ebedf0"></div>
<div class="a" style="left:551px;top:317px;width:1px;height:21px;background:#ebedf0"></div>
<div class="a" style="left:625px;top:317px;width:1px;height:21px;background:#ebedf0"></div>
<div class="a" style="left:699px;top:317px;width:1px;height:21px;background:#ebedf0"></div>
<div class="a" style="left:774px;top:317px;width:1px;height:21px;background:#ebedf0"></div>
<div class="a td" style="left:93px;top:321.6px;color:#f00;font-weight:bold">合计</div>
<div class="a td" style="left:341px;top:321.6px;color:#f00;font-weight:bold">294</div>
<div class="a td" style="left:403px;top:321.6px;color:#f00;font-weight:bold">147</div>
<div class="a td" style="left:552px;top:321.6px;color:#f00;font-weight:bold">12111.8175</div>
<div class="a td" style="left:626px;top:321.6px;color:#f00;font-weight:bold">12.050001</div>
<div class="a td" style="left:775px;top:321.6px;color:#f00;font-weight:bold">55592.75</div>
<svg class="a" style="left:7.4px;top:348.5px" width="8" height="7" viewBox="0 0 8 7"><path d="M3.6.5L.8 3.5l2.8 3M7.2.5L4.4 3.5l2.8 3" stroke="#c4c7cc" stroke-width=".9" fill="none"/></svg>
<svg class="a" style="left:29.5px;top:348.5px" width="5" height="7" viewBox="0 0 5 7"><path d="M4 .5L1 3.5l3 3" stroke="#c4c7cc" stroke-width=".9" fill="none"/></svg>
<svg class="a" style="left:149.3px;top:348.5px" width="5" height="7" viewBox="0 0 5 7"><path d="M1 .5l3 3-3 3" stroke="#8d9096" stroke-width=".9" fill="none"/></svg>
<svg class="a" style="left:169.0px;top:348.5px" width="8" height="7" viewBox="0 0 8 7"><path d="M.8.5l2.8 3-2.8 3M4.4.5l2.8 3-2.8 3" stroke="#8d9096" stroke-width=".9" fill="none"/></svg>
<div class="a" style="left:45px;top:347.5px;width:1px;height:9px;background:#dcdee2"></div>
<div class="a" style="left:138px;top:347.5px;width:1px;height:9px;background:#dcdee2"></div>
<div class="a" style="left:186px;top:347.5px;width:1px;height:9px;background:#dcdee2"></div>
<div class="a pg" style="left:50.0px;top:346.0px">第</div>
<div class="a" style="left:64.4px;top:342.3px;width:19.2px;height:19.5px;border:1px solid #dcdfe6;border-radius:3px;font-size:8.5px;line-height:18.5px;text-align:center;color:#333">1</div>
<div class="a pg" style="left:88.8px;top:346.0px">页，共 2 页</div>
<div class="a pg" style="left:191.6px;top:346.0px">每页记录数:</div>
<div class="a" style="left:248.0px;top:342.3px;width:37.5px;height:19.5px;border:1px solid #dcdfe6;border-radius:3px;font-size:8.5px;line-height:18.5px;padding-left:4px;color:#333">30</div>
<svg class="a" style="left:275.0px;top:350.3px" width="6" height="4" viewBox="0 0 6 4"><path d="M0 0h6L3 3.6z" fill="#777"/></svg>
<div class="a pg" style="left:729.0px;top:346.0px;width:149px;text-align:right">显示 1 - 30 条，共 31 条</div>
</div>
  </div>
</div>
</body></html>
